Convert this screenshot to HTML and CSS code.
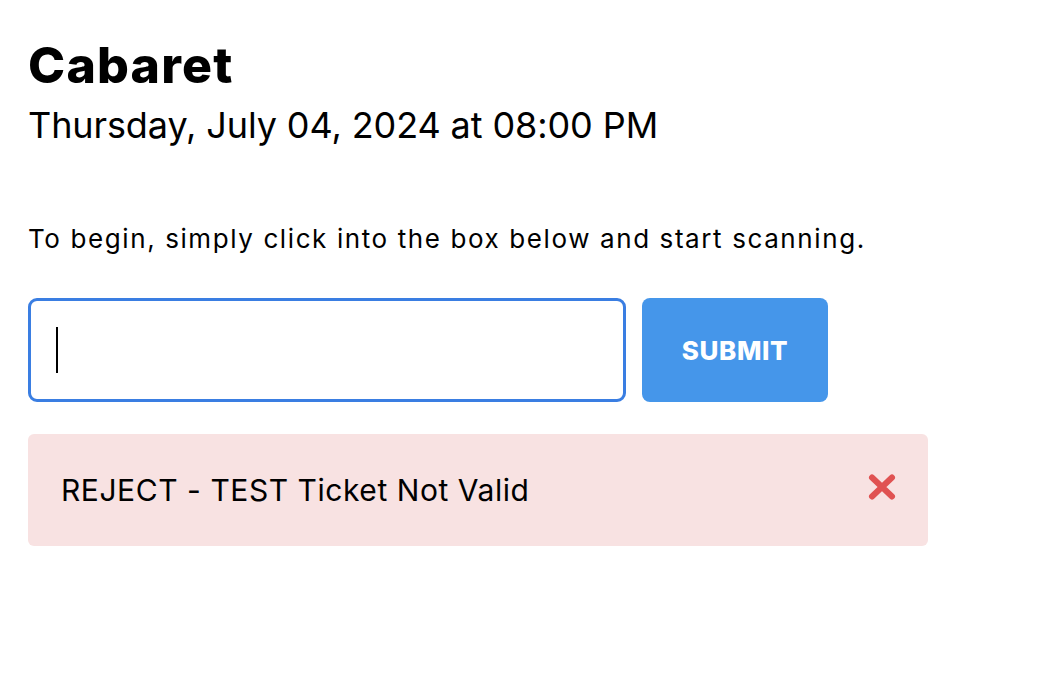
FILE: index.html
```html
<!DOCTYPE html>
<html>
<head>
<meta charset="utf-8">
<link rel="stylesheet" href="styles.css">
</head>
<body>
<main class="page">
  <h1 class="title">Cabaret</h1>
  <p class="date">Thursday, July 04, 2024 at 08:00 PM</p>
  <p class="intro">To begin, simply click into the box below and start scanning.</p>
  <form class="scan-row">
    <div class="scan-input"><span class="caret"></span></div>
    <button type="button" class="submit">SUBMIT</button>
  </form>
  <div class="alert">
    <span class="alert-text">REJECT - TEST Ticket Not Valid</span>
    <svg class="alert-icon" viewBox="0 0 30 28" width="30" height="28">
      <path d="M5 4.5 L25 23.5 M25 4.5 L5 23.5" stroke="#e05252" stroke-width="6" stroke-linecap="round"/>
    </svg>
  </div>
</main>
</body>
</html>
```
FILE: styles.css
```css
html, body {
  margin: 0;
  padding: 0;
  background: #ffffff;
}
body {
  font-family: Inter, "Liberation Sans", sans-serif;
  color: #000;
}
.page {
  padding: 35px 28px 0 28px;
  width: 900px;
}
.title {
  margin: 0;
  font-size: 50px;
  font-weight: 800;
  line-height: 60px;
  letter-spacing: 1.2px;
}
.date {
  margin: 0;
  font-size: 36px;
  font-weight: 400;
  line-height: 60px;
  letter-spacing: -0.1px;
}
.intro {
  margin: 66px 0 0 0;
  font-size: 26px;
  line-height: 36px;
  letter-spacing: 1.6px;
}
.scan-row {
  display: flex;
  gap: 16px;
  margin-top: 41px;
}
.scan-input {
  box-sizing: border-box;
  width: 598px;
  height: 104px;
  border: 3px solid #3a7ee2;
  border-radius: 9px;
  display: flex;
  align-items: center;
  padding-left: 25px;
}
.caret {
  width: 2px;
  height: 46px;
  background: #000;
}
.submit {
  width: 186px;
  height: 104px;
  border: none;
  border-radius: 8px;
  background: #4596ea;
  color: #fff;
  font-family: Inter, "Liberation Sans", sans-serif;
  font-weight: 800;
  font-size: 26px;
  letter-spacing: 0.6px;
  padding: 0;
}
.alert {
  margin-top: 32px;
  width: 900px;
  height: 112px;
  box-sizing: border-box;
  background: #f8e2e2;
  border-radius: 6px;
  display: flex;
  align-items: center;
  justify-content: space-between;
  padding: 0 31px 0 33px;
}
.alert-text {
  font-size: 30px;
  letter-spacing: 0.55px;
}
.alert-icon {
  display: block;
  margin-bottom: 7px;
}
```
